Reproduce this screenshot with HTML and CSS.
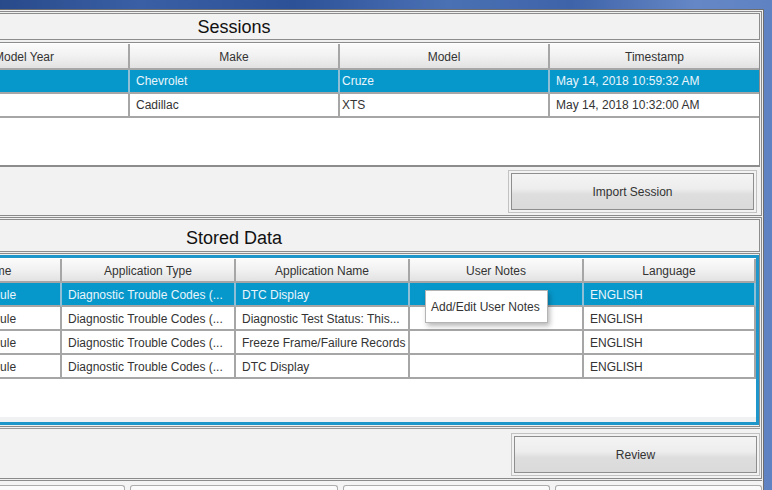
FILE: index.html
```html
<!DOCTYPE html>
<html>
<head>
<meta charset="utf-8">
<title>Sessions</title>
<link rel="stylesheet" href="styles.css">
</head>
<body>
<div class="window">
  <section class="section">
    <div class="title">Sessions</div>
    <div class="tablebox sessbox">
      <div class="viewport sessview">
        <div class="row srow head">
          <div class="c h">VIN</div><div class="c h">Model Year</div><div class="c h">Make</div><div class="c h">Model</div><div class="c h">Timestamp</div>
        </div>
        <div class="row srow sel">
          <div class="c">1G1BE5SM7J7100001</div><div class="c">2018</div><div class="c">Chevrolet</div><div class="c tight">Cruze</div><div class="c">May 14, 2018 10:59:32 AM</div>
        </div>
        <div class="row srow">
          <div class="c">1G6AY5S37J0100002</div><div class="c">2018</div><div class="c">Cadillac</div><div class="c tight">XTS</div><div class="c">May 14, 2018 10:32:00 AM</div>
        </div>
      </div>
    </div>
    <div class="btnbar">
      <div class="btnframe f1"><button class="btn">Import Session</button></div>
    </div>
  </section>

  <section class="section">
    <div class="title tall">Stored Data</div>
    <div class="tablebox">
      <div class="ring">
        <div class="viewport storeview">
          <div class="row drow head">
            <div class="c h">Date</div><div class="c h">Module Name</div><div class="c h">Application Type</div><div class="c h">Application Name</div><div class="c h">User Notes</div><div class="c h">Language</div>
          </div>
          <div class="row drow sel">
            <div class="c">05/14/2018</div><div class="c">Engine Control Module</div><div class="c">Diagnostic Trouble Codes (...</div><div class="c">DTC Display</div><div class="c"></div><div class="c">ENGLISH</div>
          </div>
          <div class="row drow">
            <div class="c">05/14/2018</div><div class="c">Engine Control Module</div><div class="c">Diagnostic Trouble Codes (...</div><div class="c">Diagnostic Test Status: This...</div><div class="c"></div><div class="c">ENGLISH</div>
          </div>
          <div class="row drow">
            <div class="c">05/14/2018</div><div class="c">Engine Control Module</div><div class="c">Diagnostic Trouble Codes (...</div><div class="c">Freeze Frame/Failure Records</div><div class="c"></div><div class="c">ENGLISH</div>
          </div>
          <div class="row drow">
            <div class="c">05/14/2018</div><div class="c">Engine Control Module</div><div class="c">Diagnostic Trouble Codes (...</div><div class="c">DTC Display</div><div class="c"></div><div class="c">ENGLISH</div>
          </div>
        </div>
        <div class="hband"></div>
      </div>
    </div>
    <div class="btnbar bar2">
      <div class="btnframe f2"><button class="btn">Review</button></div>
    </div>
  </section>

  <div class="tabs">
    <div class="tab"></div><div class="tab"></div><div class="tab"></div><div class="tab"></div><div class="tab"></div>
  </div>
</div>

<div class="menu">Add/Edit User Notes</div>
</body>
</html>
```

FILE: styles.css
```css
* { box-sizing: border-box; }
html, body { margin: 0; height: 100%; }
body {
  overflow: hidden;
  position: relative;
  font-family: "Liberation Sans", Arial, sans-serif;
  font-size: 12px;
  color: #333;
  background: linear-gradient(90deg, #284a8b 0%, #3a5fa4 18%, #2d5197 38%, #4b71b5 58%, #3e63a8 74%, #6587c6 90%, #5f82c2 100%);
}
.window {
  margin: 9px 0 0 -296px;
  width: 1060px;
  border: 1px solid #6e6e6e;
  padding: 1px;
  background: #f0f0f0;
  display: flex;
  flex-direction: column;
  gap: 1px;
}
.section {
  border: 1px solid #8a8a8a;
  padding: 1px 1px 0 1px;
  background: #f0f0f0;
  display: flex;
  flex-direction: column;
}
.title {
  border: 1px solid #8c8c8c;
  background: #f2f2f2;
  height: 27px;
  padding-top: 1px;
  line-height: 25px;
  text-align: center;
  font-size: 18px;
  color: #111;
  margin-bottom: 2px;
  overflow: hidden;
}
.title.tall {
  height: 33px;
  padding-top: 6px;
  margin-bottom: 1px;
}
.tablebox {
  border: 1px solid #8c8c8c;
  background: #f0f0f0;
  padding: 1px 0;
}
.sessbox {
  background: #fff;
  padding: 1px 0 0 1px;
  border-bottom-width: 2px;
}
.ring {
  border: 3px solid #1f96c9;
  padding-top: 1px;
  background: #fff;
}
.viewport { background: #fff; }
.sessview { height: 121px; }
.storeview { height: 158px; }
.hband { height: 5px; background: #eff1f2; }

.row { display: grid; }
.srow { grid-template-columns: 210px 210px 210px 210px 1fr; }
.drow { grid-template-columns: 176px 174px 174px 174px 174px 1fr; }

.c {
  height: 24px;
  line-height: 22px;
  padding: 0 6px;
  border-right: 2px solid #a6a6a6;
  border-bottom: 2px solid #a6a6a6;
  white-space: nowrap;
  overflow: hidden;
}
.drow .c { padding-top: 1px; }
.srow .c:last-child { border-right: 0; }
.c.tight { padding-left: 2px; }
.head .c {
  text-align: center;
  background: linear-gradient(#fbfbfb, #f1f1f1 50%, #e2e2e2);
  color: #333;
}
.srow.head .c { height: 26px; padding-top: 2px; line-height: 22px; }
.sel .c {
  background: #0798cb;
  color: #eaf5fb;
  border-right-color: #8fbfd6;
}

.btnbar {
  height: 48px;
  display: flex;
  justify-content: flex-end;
  align-items: flex-start;
  background: #f2f2f2;
}
.bar2 {
  height: 50px;
  margin-top: 1px;
  border-top: 1px solid #9a9a9a;
}
.btnframe {
  border: 1px solid #c2c2c2;
  padding: 2px;
  width: 249px;
  height: 43px;
}
.f1 { margin: 3px 3px 0 0; }
.f2 { margin: 4px 0 0 0; }
.btn {
  display: block;
  width: 100%;
  height: 37px;
  margin: 0;
  border: 1px solid #8e8e8e;
  border-radius: 0;
  background: linear-gradient(#f4f4f4 0%, #ededed 42%, #dedede 58%, #dadada 100%);
  font-family: "Liberation Sans", Arial, sans-serif;
  font-size: 12px;
  color: #333;
  padding: 0;
}

.tabs {
  border-top: 1px solid #8c8c8c;
  padding-top: 4px;
  display: flex;
  gap: 5px;
  background: #f4f4f4;
}
.tab {
  width: 208px;
  height: 30px;
  border: 1px solid #adadad;
  border-bottom: 0;
  border-radius: 3px 3px 0 0;
  background: linear-gradient(#fcfcfc, #eeeeee);
}

.menu {
  position: absolute;
  left: 425px;
  top: 290px;
  width: 123px;
  height: 33px;
  line-height: 32px;
  padding-left: 5px;
  background: #fff;
  border: 1px solid #b4b4b4;
  box-shadow: 2px 3px 5px rgba(0, 0, 0, 0.28);
  color: #333;
  white-space: nowrap;
}
```
